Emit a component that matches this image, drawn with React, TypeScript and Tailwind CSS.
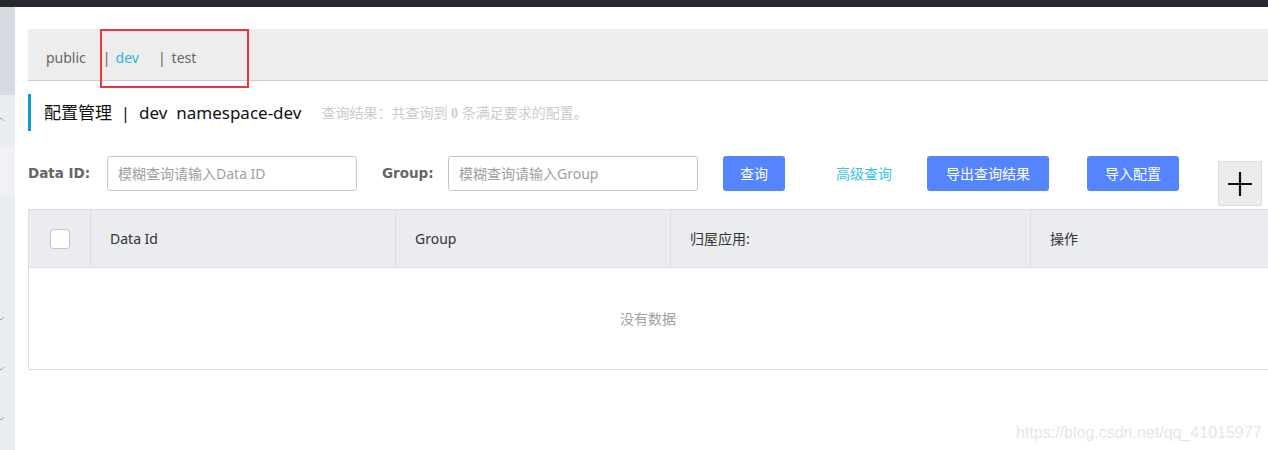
import React from 'react';

const cjk = { fontFamily: '"Noto Sans", "Noto Sans CJK SC", sans-serif' };
const label = { fontFamily: '"DejaVu Sans", "Noto Sans CJK SC", sans-serif' };

const Chevron: React.FC<{ up?: boolean }> = ({ up }) => (
  <svg width="6" height="6" viewBox="0 0 6 6" className="block">
    <path d={up ? 'M-2 4 L1 1 L4 4' : 'M-2 2 L1 5 L4 2'} fill="none" stroke="#9aa3ad" strokeWidth="1" />
  </svg>
);

const App: React.FC = () => {
  const cols = [
    { w: 'w-[305px]', text: 'Data Id' },
    { w: 'w-[275px]', text: 'Group' },
    { w: 'w-[360px]', text: '归屋应用:' },
    { w: 'flex-1', text: '操作' },
  ];

  return (
    <div className="relative w-[1268px] h-[450px] overflow-hidden bg-white" style={cjk}>
      <div className="h-[7px] bg-[#25292e]" />
      <div className="flex h-[443px]">
        {/* sidebar strip */}
        <div className="w-[15px] flex flex-col shrink-0">
          <div className="h-[88px] bg-[#d6dae1]" />
          <div className="h-[50px] bg-[#e9ecf0] flex items-center">
            <Chevron up />
          </div>
          <div className="h-[50px] bg-[#f0f2f5]" />
          <div className="flex-1 bg-[#e9ecf0] flex flex-col pt-[120px] gap-[44px]">
            <Chevron />
            <Chevron />
            <Chevron />
          </div>
        </div>

        {/* main */}
        <div className="flex-1 pl-[13px] min-w-0">
          <div className="relative mt-[22px] h-[52px] pt-[5px] bg-[#ededed] border-b border-[#cccccc] flex items-center text-[14px] text-[#666]">
            <span className="ml-[18px]">public</span>
            <span className="ml-[17px] text-[#8a5a3c]">|</span>
            <span className="ml-[5px] text-[#2cb7e0]">dev</span>
            <span className="ml-[19px] text-[#6e5a48]">|</span>
            <span className="ml-[6px]">test</span>
            <div className="absolute left-[72px] top-0 w-[149px] h-[59px] border-2 border-[#e8383d]" />
          </div>

          <div className="mt-[13px] h-[37px] border-l-[3px] border-[#0a9bd6] flex items-center">
            <span className="ml-[13px] text-[17px] text-[#111] whitespace-pre">配置管理  |  dev  namespace-dev</span>
            <span className="ml-[20px] text-[14px] text-[#cccccc]">
              查询结果：共查询到 <b className="font-bold" style={{ fontFamily: '"Liberation Serif", serif' }}>0</b> 条满足要求的配置。
            </span>
          </div>

          <div className="mt-[25px] flex items-start">
            <div className="w-[63px] h-[35px] flex items-center">
              <span className="text-[13.5px] font-bold text-[#666] whitespace-nowrap" style={label}>Data ID:</span>
            </div>
            <div className="ml-[16px] w-[250px] h-[35px] border border-[#c4c6cf] rounded-[3px] flex items-center px-[10px] text-[14px] text-[#a0a0a0]">
              模糊查询请输入Data ID
            </div>
            <div className="ml-[25px] w-[50px] h-[35px] flex items-center">
              <span className="text-[13.5px] font-bold text-[#666] whitespace-nowrap" style={label}>Group:</span>
            </div>
            <div className="ml-[16px] w-[250px] h-[35px] border border-[#c4c6cf] rounded-[3px] flex items-center px-[10px] text-[14px] text-[#a0a0a0]">
              模糊查询请输入Group
            </div>
            <button className="ml-[25px] w-[62px] h-[35px] rounded-[3px] bg-[#5584ff] text-white text-[14px]">查询</button>
            <div className="ml-[51px] h-[35px] flex items-center text-[14px] text-[#3cc3e0]">高级查询</div>
            <button className="ml-[35px] w-[122px] h-[35px] rounded-[3px] bg-[#5584ff] text-white text-[14px]">导出查询结果</button>
            <button className="ml-[38px] w-[92px] h-[35px] rounded-[3px] bg-[#5584ff] text-white text-[14px]">导入配置</button>
            <div className="ml-[39px] mt-[5px] w-[44px] h-[45px] bg-[#ececec] border border-[#dddddd] flex items-center justify-center">
              <svg width="26" height="26" viewBox="0 0 26 26">
                <path d="M13 1 V25 M1 13 H25" stroke="#111" strokeWidth="2.2" />
              </svg>
            </div>
          </div>

          <div className="mt-[3px] w-[1300px] border border-[#dcdee3]">
            <div className="h-[58px] bg-[#ebecf0] flex border-b border-[#dcdee3] text-[14px] text-[#333]">
              <div className="w-[62px] border-r border-[#dcdee3] flex items-center justify-center">
                <div className="w-[20px] h-[20px] bg-white border border-[#c4c6cf] rounded-[3px]" />
              </div>
              {cols.map((c, i) => (
                <div
                  key={c.text}
                  className={`${c.w} ${i < cols.length - 1 ? 'border-r border-[#dcdee3]' : ''} flex items-center pl-[19px]`}
                >
                  {c.text}
                </div>
              ))}
            </div>
            <div className="h-[101px] flex items-center">
              <span className="ml-[591px] text-[14px] text-[#a0a0a0]">没有数据</span>
            </div>
          </div>
        </div>
      </div>

      <div
        className="absolute left-[1016px] top-[421px] text-[16px] text-[#e6e6e6]"
        style={{ fontFamily: '"Liberation Sans", sans-serif' }}
      >
        https://blog.csdn.net/qq_41015977
      </div>
    </div>
  );
};

export default App;
